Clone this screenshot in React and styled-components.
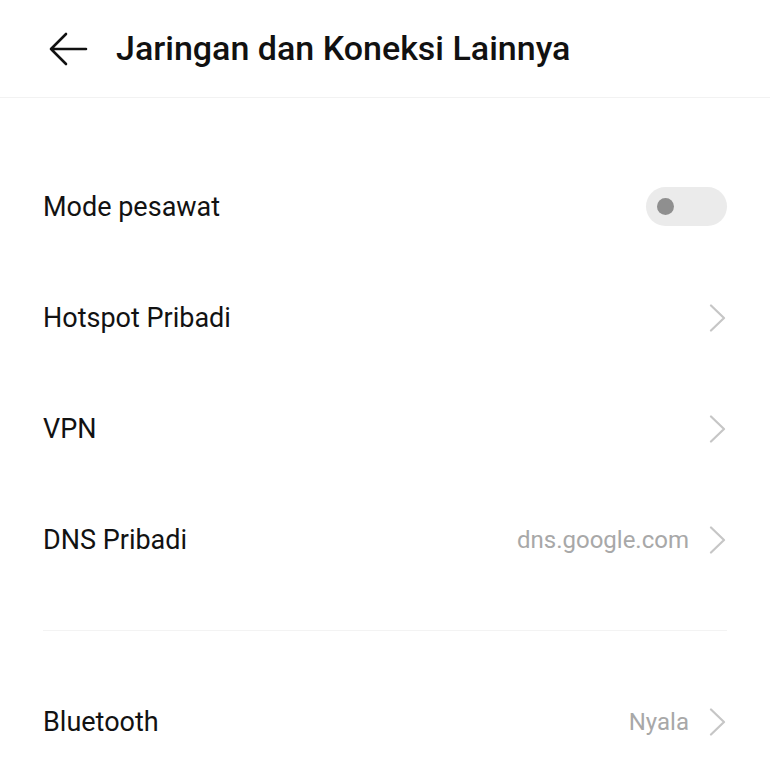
import React from "react";
import styled, { createGlobalStyle } from "styled-components";

const Global = createGlobalStyle`
  html, body { margin: 0; padding: 0; background: #fff; }
  body { font-family: Roboto, "Noto Sans", sans-serif; -webkit-font-smoothing: antialiased; }
`;

const Page = styled.div`
  width: 770px;
  height: 775px;
  overflow: hidden;
  background: #fff;
`;

const Header = styled.header`
  height: 97px;
  display: flex;
  align-items: center;
  padding-left: 48px;
  gap: 26px;
  border-bottom: 1px solid #f2f2f2;
`;

const BackButton = styled.button`
  border: 0;
  background: none;
  padding: 0;
  width: 42px;
  height: 34px;
  display: flex;
  align-items: center;
  color: #111;
`;

const Title = styled.h1`
  margin: 0 0 2px 0;
  font-size: 34px;
  font-weight: 500;
  color: #111;
  letter-spacing: 0;
`;

const List = styled.div`
  padding: 53px 43px 0 43px;
`;

const Row = styled.div`
  height: 111px;
  display: flex;
  align-items: center;
  justify-content: space-between;
`;

const Label = styled.span`
  font-size: 27px;
  color: #121212;
`;

const Trailing = styled.div`
  display: flex;
  align-items: center;
  gap: 20px;
`;

const Value = styled.span`
  font-size: 24px;
  color: #a8a8a8;
`;

const Divider = styled.div`
  height: 1px;
  background: #f3f3f3;
  margin: 35px 0;
`;

const Track = styled.div`
  width: 81px;
  height: 39px;
  border-radius: 20px;
  background: #ebebeb;
  display: flex;
  align-items: center;
  padding-left: 11px;
  box-sizing: border-box;
`;

const Knob = styled.div`
  width: 17px;
  height: 17px;
  border-radius: 50%;
  background: #8f8f8f;
`;

const Chevron = () => (
  <svg width="18" height="28" viewBox="0 0 18 28" fill="none">
    <path d="M2 1.5 L15 14 L2 26.5" stroke="#c6c6c6" strokeWidth="2.2" strokeLinecap="round" strokeLinejoin="round" />
  </svg>
);

const ArrowLeft = () => (
  <svg width="40" height="34" viewBox="0 0 40 34" fill="none">
    <path d="M18 2 L3 17 L18 32 M3 17 H38" stroke="#111" strokeWidth="2.6" strokeLinecap="round" strokeLinejoin="round" />
  </svg>
);

const NavRow = ({ label, value }) => (
  <Row>
    <Label>{label}</Label>
    <Trailing>
      {value && <Value>{value}</Value>}
      <Chevron />
    </Trailing>
  </Row>
);

export default function App() {
  return (
    <Page>
      <Global />
      <Header>
        <BackButton aria-label="Kembali">
          <ArrowLeft />
        </BackButton>
        <Title>Jaringan dan Koneksi Lainnya</Title>
      </Header>
      <List>
        <Row>
          <Label>Mode pesawat</Label>
          <Track>
            <Knob />
          </Track>
        </Row>
        <NavRow label="Hotspot Pribadi" />
        <NavRow label="VPN" />
        <NavRow label="DNS Pribadi" value="dns.google.com" />
        <Divider />
        <NavRow label="Bluetooth" value="Nyala" />
      </List>
    </Page>
  );
}
